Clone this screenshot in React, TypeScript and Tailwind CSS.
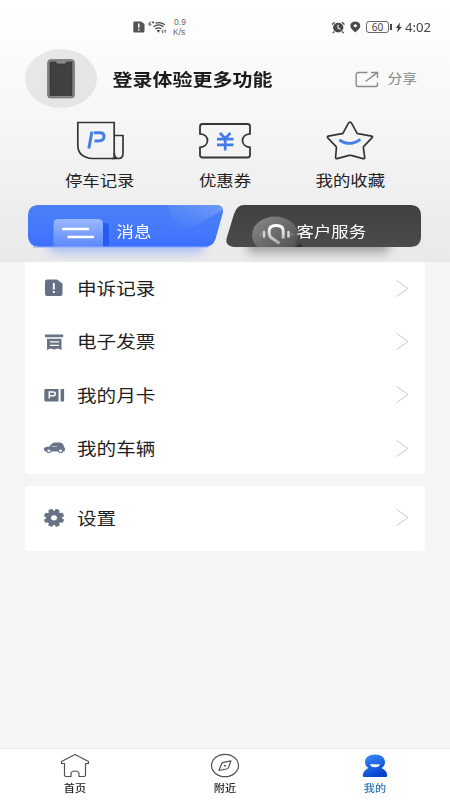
import React from "react";

function Squat({ children, className = "" }: { children: React.ReactNode; className?: string }) {
  return <span className={`inline-block whitespace-nowrap scale-y-[0.87] ${className}`}>{children}</span>;
}

function StatusBar() {
  return (
    <div className="flex h-[54px] items-center pl-[133px] pr-[17px] text-[#444]">
      <svg width="12" height="12" viewBox="0 0 12 12">
        <path d="M1.5 .5H8L11.5 3v7a1.5 1.5 0 0 1-1.5 1.5H1.5A1.2 1.2 0 0 1 .3 10V1.7A1.2 1.2 0 0 1 1.5.5Z" fill="#555" />
        <path d="M5.8 2.5v4.2M5.8 8v1.5" stroke="#fff" strokeWidth="1.5" />
      </svg>
      <svg className="ml-[3px]" width="19" height="15" viewBox="0 0 19 15" fill="none" stroke="#444">
        <path d="M3 1.8C1.7 2 .8 3.2.9 4.5c.1 1.3 2 1.2 2 .1 0-1-1.4-1.1-1.9-.2M3.9 2.4h2.2M5 1.3v2.2" strokeWidth=".9" />
        <path d="M7.5 3.1c3.3-1 6.5-.5 9.3 1.6M5.5 6.8c3-2.300 7-2.300 10 0M7.300 9c1.900-1.300 4.300-1.300 6.200 0" strokeWidth="1.25" />
        <path d="M8.800 10.500c1-.6 2.200-.6 3.200 0l-1.600 2.200Z" fill="#444" stroke="none" />
        <path d="M14.700 9.800v3M13.900 11.600l.8 1.200M17 12.800v-3l.8 1.200" strokeWidth=".8" />
      </svg>
      <div className="ml-[5px] flex w-[19px] flex-col gap-px font-['Liberation_Sans'] text-[8.5px] leading-[9px] text-[#666]">
        <div className="w-[16px] text-center">0.9</div>
        <div className="pl-px">K/s</div>
      </div>
      <div className="ml-auto flex items-center">
        <svg width="15" height="13" viewBox="0 0 15 13" fill="none">
          <ellipse cx="7.2" cy="6.6" rx="5.2" ry="4.8" fill="#4a4a4a" />
          <path d="M1 3.4 3.7 1.2M10.8 1.2l2.7 2.2M3.2 10.5l-1.4 1.6M11.2 10.5l1.4 1.6" stroke="#4a4a4a" strokeWidth="1.3" />
          <path d="M7 3.7v3.2l2.5 1.5" stroke="#fff" strokeWidth="1.1" />
        </svg>
        <svg className="ml-[4px]" width="11" height="12" viewBox="0 0 11 12">
          <path fillRule="evenodd" d="M5.3.5C2.4.5.3 2.2.3 4.7.3 7.4 3.5 9.5 5.3 11.4c1.8-1.9 5-4 5-6.7C10.3 2.2 8.2.5 5.3.5Zm0 2.7a1.7 1.5 0 1 1 0 3 1.7 1.5 0 0 1 0-3Z" fill="#4a4a4a" />
        </svg>
        <div className="ml-[5px] flex h-[12px] w-[23px] items-center justify-center rounded-[3px] border border-[#666] font-['Noto_Sans'] text-[10px] leading-none text-[#444]">60</div>
        <div className="ml-px h-[6px] w-[2px] bg-[#444]" />
        <svg className="ml-[3px]" width="8" height="11" viewBox="0 0 8 11">
          <path d="M5 .5.8 6H3l-1 4.5L7 4.700H4.500Z" fill="#444" />
        </svg>
        <div className="flex w-[30px] translate-y-px pl-[2px]">
          <span className="inline-block origin-left scale-x-[1.05] font-['Noto_Sans'] text-[12.5px] leading-none text-[#444]">4:02</span>
        </div>
      </div>
    </div>
  );
}

function Profile() {
  return (
    <div className="flex h-[50px] items-center pl-[25px] pr-[33px]">
      <div className="-mt-px flex h-[59px] w-[72px] items-center justify-center rounded-[50%] bg-linear-to-br from-[#e9e9e9] to-[#e3e3e3]">
        <svg width="28" height="40" viewBox="0 0 28 40">
          <rect x=".8" y=".8" width="26.4" height="38" rx="2.5" fill="#8a8a8a" stroke="#686868" />
          <path d="M3 3h6q0 2 1.5 2H18q1.5 0 1.5-2H25v33.5H3Z" fill="#404040" stroke="#333" strokeWidth=".7" />
        </svg>
      </div>
      <Squat className="ml-[15.5px] text-[20px] font-bold text-[#1b1b1b]">登录体验更多功能</Squat>
      <div className="ml-auto flex items-center">
        <svg width="24" height="17" viewBox="0 0 24 17" fill="none" stroke="#8b8b8b" strokeWidth="1.4">
          <path d="M12.5 1.5H3.2Q1.2 1.5 1.2 3.3v10.4q0 1.8 2 1.8h17.5q1.8 0 1.8-1.8V11.5M16 1.5h6.5v5.5M22.3 1.6 10.5 10.5" />
        </svg>
        <Squat className="ml-[8.5px] -translate-y-px text-[14.8px] text-[#888]">分享</Squat>
      </div>
    </div>
  );
}

const shortcuts = [
  {
    label: "停车记录",
    icon: (
      <svg width="48" height="40" viewBox="0 0 48 40" fill="none" stroke="#353535" strokeWidth="1.7">
        <path d="M1.800 1.500H38.200V37.500H15.500Q1.800 36 1.800 24Z" />
        <path d="M38.200 14.500H47V32q0 5.500-4.300 5.500T38.200 32M36 37.500h7" />
        <path d="M16 10.500 12.800 27.500M18 11.800h5.500q4.500 0 4.500 3.500 0 4.700-6 4.700h-3.500" stroke="#487de8" strokeWidth="3" />
      </svg>
    ),
  },
  {
    label: "优惠券",
    icon: (
      <svg width="54" height="40" viewBox="0 0 54 40" fill="none" stroke="#353535" strokeWidth="1.8">
        <path d="M4.500 3H49.500q2.500 0 2.500 2.500v7.300c-4.500.3-7.500 3-7.500 6.700s3 6.500 7.500 6.800v7.700q0 2.500-2.500 2.500H4.500Q2 36.500 2 34v-7.700c4.500-.3 7.500-3.100 7.500-6.800s-3-6.400-7.500-6.700V5.500Q2 3 4.500 3Z" />
        <path d="m22 12 5.200 5.500 5.200-5.500M27.200 17.500V29.500M19 18.200H35.500M19 23.800H35.500" stroke="#437be9" strokeWidth="2.7" />
      </svg>
    ),
  },
  {
    label: "我的收藏",
    icon: (
      <svg width="48" height="40" viewBox="0 0 48 40" fill="none" stroke="#353535" strokeWidth="1.7" strokeLinejoin="round">
        <path d="M24 1.200q1 0 1.700 1.200l5 9.300q.5.800 1.400 1l13.500 2.400q1.600.5.300 1.700l-8.100 8.500q-.6.700-.4 1.500l1.300 9.500q.2 1.800-1.700 1.300l-11.900-3.200q-1-.3-2 0L11 37.600q-1.500.4-1.400-1.300l.8-9.500q.1-.9-.5-1.500L1.800 16.800q-1-1.300.5-1.700l13.600-2.400q.9-.2 1.400-1l5-9.300q.7-1.200 1.700-1.200Z" />
        <path d="M13.300 18.800q10.400 7.500 21-.5" stroke="#467de9" strokeWidth="2.8" />
      </svg>
    ),
  },
];

function Banners() {
  return (
    <div className="flex h-[57px] pl-[28px]">
      <div className="relative h-[42px] w-[196px]">
        <div className="absolute inset-x-5 top-8 h-4 rounded-full bg-[#6488fb]/45 blur-[5px]" />
        <svg className="absolute inset-0" width="196" height="43" viewBox="0 0 196 43">
          <defs>
            <linearGradient id="blue" x1="0" y1="0" x2="0" y2="1">
              <stop stopColor="#4b80f6" /><stop offset=".7" stopColor="#4277fc" /><stop offset="1" stopColor="#3c70ff" />
            </linearGradient>
            <linearGradient id="sheen" x1="1" y1="0" x2="0" y2="1">
              <stop stopColor="#a8c0ff" stopOpacity=".4" /><stop offset=".8" stopColor="#a8c0ff" stopOpacity="0" />
            </linearGradient>
            <linearGradient id="note" x1="0" y1="0" x2="0" y2="1">
              <stop stopColor="#9bb8ff" /><stop offset="1" stopColor="#5c88fc" />
            </linearGradient>
          </defs>
          <path d="M11 0H188Q197 0 194.500 9L187.500 34Q185 42 176 42H11Q0 41 0 31V11Q0 0 11 0Z" fill="url(#blue)" />
          <path d="M150 30 195 5Q196 0 188 0H140Z" fill="url(#sheen)" />
          <path d="M73 18h4q4 0 4 4v20h-8Z" fill="#245cf1" />
          <path d="M25.500 42V19q0-5 5-5H70q5 0 5 5v23Z" fill="url(#note)" />
          <path d="M35 24H60M40.500 32H65" stroke="#fff" strokeWidth="2.5" strokeLinecap="round" />
          <path d="M5 42H180" stroke="#8eaaff" strokeWidth="1" />
        </svg>
        <Squat className="absolute left-[88.5px] top-[13px] text-[17.4px] leading-[26px] text-white">消息</Squat>
      </div>
      <div className="relative ml-[2px] h-[42px] w-[196px]">
        <div className="absolute left-5 right-8 top-8 h-4 rounded-full bg-black/30 blur-[5px]" />
        <svg className="absolute inset-0" width="196" height="43" viewBox="0 0 196 43">
          <defs>
            <linearGradient id="dark" x1="0" y1="0" x2="0" y2="1"><stop stopColor="#404040" /><stop offset="1" stopColor="#4b4b4b" /></linearGradient>
            <linearGradient id="disc" x1="0" y1="0" x2="1" y2="1"><stop stopColor="#8a8a8a" /><stop offset="1" stopColor="#4b4b4b" /></linearGradient>
            <linearGradient id="headset" x1="0" y1="0" x2="0" y2="1"><stop stopColor="#fff" /><stop offset="1" stopColor="#aaa" /></linearGradient>
            <clipPath id="darkClip"><path d="M18 0H184Q195 0 195 11V31Q195 42 184 42H8Q-2 41 1 32L8 9Q11 0 18 0Z" /></clipPath>
          </defs>
          <g clipPath="url(#darkClip)">
            <rect width="196" height="42" fill="url(#dark)" />
            <ellipse cx="49" cy="30" rx="23" ry="18.5" fill="url(#disc)" />
            <path d="M74 38q-3 4-7 5h10Z" fill="#303030" />
            <path d="M53.500 38.500 45 32.500Q43.200 31 43.200 28.500V26q0-5.500 7-5.500t7 5.500v7.500" fill="none" stroke="url(#headset)" strokeWidth="3" />
            <path d="M38 27v4.500M62.500 27v4.500" stroke="#d2d2d2" strokeWidth="2.6" strokeLinecap="round" />
            <path d="M34.500 29v1M66 29v1" stroke="#999" strokeWidth="1.3" strokeLinecap="round" />
          </g>
        </svg>
        <Squat className="absolute left-[70.5px] top-[13px] text-[17.4px] leading-[26px] text-white">客户服务</Squat>
      </div>
    </div>
  );
}

const menu = [
  {
    label: "申诉记录",
    icon: (
      <>
        <path d="M4 2.500h10l5.500 4v10.500q0 2-2 2H4q-2 0-2-2V4.500q0-2 2-2Z" fill="#647084" />
        <path d="M10.800 6v6.500M10.800 14v2" stroke="#fff" strokeWidth="1.9" />
      </>
    ),
  },
  {
    label: "电子发票",
    icon: (
      <>
        <path d="M2 3.500H20.200V6.200H2ZM4 7.700h14.500v11.300l-3.500-1.500-3.800 1-3.800-1L4 19Z" fill="#687385" />
        <path d="M7 10.800h9M7 14.300h9" stroke="#fff" strokeWidth="1.2" />
      </>
    ),
  },
  {
    label: "我的月卡",
    icon: (
      <>
        <path d="M2.500 5H15.500V17.500H2.500Q1.300 17.500 1.300 16.300V6.200Q1.300 5 2.500 5ZM17.600 5h3.500v12.500h-3.500Z" fill="#647182" />
        <path d="M6.300 14.500V8h3.900q2.100 0 2.100 1.800 0 2-2.400 2H6.500" fill="none" stroke="#fff" strokeWidth="1.6" />
      </>
    ),
  },
  {
    label: "我的车辆",
    icon: (
      <>
        <path d="M.8 11.500Q1.500 10.200 6.500 9.600 8.500 5.900 11.500 5.500h5q3.500 0 4.500 4l1.200 2.500-.8 2.500H2.500Q.5 13.500.8 11.500Z" fill="#687489" />
        <path d="M9 9.500h5" fill="none" stroke="#b9c3d6" strokeWidth=".9" />
        <path d="M3.800 13.700a2.100 1.800 0 1 0 4.200 0 2.100 1.800 0 1 0-4.200 0M15.500 13.700a2.100 1.800 0 1 0 4.200 0 2.100 1.800 0 1 0-4.200 0" fill="#fff" stroke="#687489" strokeWidth="1.1" />
      </>
    ),
  },
];

const gear = (
  <g transform="translate(11 10.800) scale(1 .89)">
    {[22.5, 67.5, 112.5, 157.5, 202.5, 247.5, 292.5, 337.5].map((angle) => (
      <path key={angle} d="M-2.700-6.500-2.100-9.700q.2-.5.700-.5h2.800q.5 0 .7.500l.6 3.200Z" fill="#677287" transform={`rotate(${angle})`} />
    ))}
    <circle r="5.5" fill="none" stroke="#677287" strokeWidth="5" />
  </g>
);

function Row({ label, icon }: { label: string; icon: React.ReactNode }) {
  return (
    <div className="flex h-[53.4px] items-center pl-[17.5px] pr-[16px]">
      <svg width="23" height="23" viewBox="0 0 23 23">{icon}</svg>
      <Squat className="ml-[11.5px] -translate-y-px text-[19.6px] text-[#1f1f1f]">{label}</Squat>
      <svg className="ml-auto -translate-y-[0.5px]" width="13" height="18" viewBox="0 0 13 18" fill="none" stroke="#c8c8c8" strokeWidth="1">
        <path d="M.5 .8 12 9 .5 17.2" />
      </svg>
    </div>
  );
}

function TabBar() {
  return (
    <nav className="grid h-[52px] grid-cols-3 border-t border-[#e9e9e9] bg-white pt-[4px] text-[11.2px] font-medium leading-[16px] text-[#222]">
      <div className="flex flex-col items-center">
        <svg width="30" height="26" viewBox="0 0 30 26" fill="none" stroke="#505050" strokeWidth="1.2" strokeLinejoin="round">
          <path d="M15 1.500 28.500 8.500v2H25.500V22q0 1.500-1.500 1.500H19V21q0-3-4-3t-4 3v2.500H6Q4.500 23.500 4.500 22V10.500H1.500V8.500Z" />
        </svg>
        <Squat className="mt-[1px]">首页</Squat>
      </div>
      <div className="flex flex-col items-center">
        <svg width="30" height="26" viewBox="0 0 30 26" fill="none" stroke="#505050" strokeWidth="1.2">
          <ellipse cx="15" cy="12.5" rx="13.5" ry="11.2" />
          <path d="M21 7.800 18.500 14.500Q18 15.500 16.500 16L9 17.500 11.500 11Q12 9.800 13.500 9.400Z" strokeLinejoin="round" />
          <circle cx="15" cy="12.7" r="1" fill="#505050" stroke="none" />
        </svg>
        <Squat className="mt-[1px]">附近</Squat>
      </div>
      <div className="flex flex-col items-center text-[#2876b5]">
        <svg width="26" height="26" viewBox="0 0 26 26">
          <defs>
            <linearGradient id="person" x1="0" y1="0" x2=".5" y2="1"><stop stopColor="#3b92fa" /><stop offset="1" stopColor="#0841d0" /></linearGradient>
          </defs>
          <path d="M13 1.500C7 1.500 3 4.500 3 9q0 4 3.500 6Q1 17.500.7 22.500q0 1.500 1.500 1.500h21.600q1.500 0 1.500-1.500Q25 17.500 19.500 15q3.500-2 3.500-6c0-4.500-4-7.500-10-7.500Z" fill="url(#person)" />
          <path d="M8 11.300h10q-.7 3-5 3T8 11.300Z" fill="#fff" />
        </svg>
        <Squat className="mt-[1px]">我的</Squat>
      </div>
    </nav>
  );
}

export default function App() {
  return (
    <div className="flex h-[800px] w-[450px] flex-col overflow-hidden bg-[#f5f5f5] font-['Noto_Sans_CJK_SC',sans-serif]">
      <header className="h-[262px] shrink-0 bg-linear-to-b from-white via-[#f5f5f5] to-[#e9e9ea]">
        <StatusBar />
        <Profile />
        <div className="flex h-[101px] justify-between px-[37px] pt-[17px]">
          {shortcuts.map((s) => (
            <div key={s.label} className="flex w-[126px] flex-col items-center">
              {s.icon}
              <Squat className="mt-[7px] -translate-y-px text-[17.4px] leading-[26px] text-[#222]">{s.label}</Squat>
            </div>
          ))}
        </div>
        <Banners />
      </header>
      <main className="flex-1 px-[25px]">
        <section className="h-[212px] rounded-b-[4px] bg-white">
          {menu.map((m) => (
            <Row key={m.label} label={m.label} icon={m.icon} />
          ))}
        </section>
        <section className="mt-[12px] flex h-[65px] flex-col justify-center rounded-[4px] bg-white">
          <Row label="设置" icon={gear} />
        </section>
      </main>
      <TabBar />
    </div>
  );
}
